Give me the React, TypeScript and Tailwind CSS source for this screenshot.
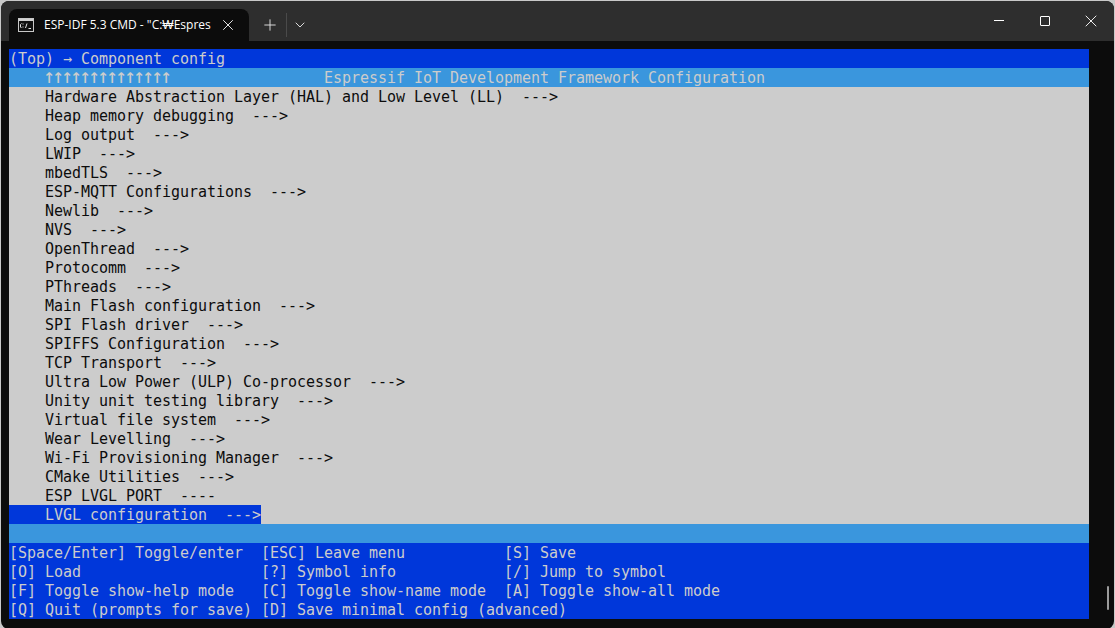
import { ChevronDown, Plus, X } from 'lucide-react';

const items = [
  'Hardware Abstraction Layer (HAL) and Low Level (LL)  --->',
  'Heap memory debugging  --->',
  'Log output  --->',
  'LWIP  --->',
  'mbedTLS  --->',
  'ESP-MQTT Configurations  --->',
  'Newlib  --->',
  'NVS  --->',
  'OpenThread  --->',
  'Protocomm  --->',
  'PThreads  --->',
  'Main Flash configuration  --->',
  'SPI Flash driver  --->',
  'SPIFFS Configuration  --->',
  'TCP Transport  --->',
  'Ultra Low Power (ULP) Co-processor  --->',
  'Unity unit testing library  --->',
  'Virtual file system  --->',
  'Wear Levelling  --->',
  'Wi-Fi Provisioning Manager  --->',
  'CMake Utilities  --->',
  'ESP LVGL PORT  ----',
];

const help = [
  '[Space/Enter] Toggle/enter  [ESC] Leave menu           [S] Save',
  '[O] Load                    [?] Symbol info            [/] Jump to symbol',
  '[F] Toggle show-help mode   [C] Toggle show-name mode  [A] Toggle show-all mode',
  '[Q] Quit (prompts for save) [D] Save minimal config (advanced)',
];

function ConsoleIcon() {
  return (
    <svg width="16" height="14" viewBox="0 0 16 14" className="shrink-0">
      <rect x="0.5" y="0.5" width="15" height="13" fill="#111" stroke="#c8c8c8" />
      <rect x="1" y="1" width="14" height="2" fill="#d0d0d0" />
      <path d="M3.5 5.5 L2.5 6.5 V9 L3.5 10 M5 5.5 V6.5 M5 8.5 V9.5 M7.5 10 L9 5.5 M10.5 10.5 H13" stroke="#e6e6e6" strokeWidth="1" fill="none" />
    </svg>
  );
}

export default function App() {
  return (
    <div className="w-[1115px] h-[628px] bg-[#c9c9c9] overflow-hidden">
      <div className="relative h-full flex flex-col rounded-[8px] overflow-hidden bg-[#0c0c0c] ml-px mt-px mr-px mb-px">
        {/* Title bar */}
        <div className="h-[40px] shrink-0 flex bg-[#2e2e2e] pt-[8px] pl-[8px]">
          <div className="w-[240px] h-[32px] flex items-center bg-[#0c0c0c] rounded-t-[8px] pl-[9px]">
            <ConsoleIcon />
            <span
              className="ml-[10px] w-[165px] whitespace-pre text-[12px] text-white"
              style={{ fontFamily: '"Open Sans", sans-serif' }}
            >
              ESP-IDF 5.3 CMD - "C:₩Espres
            </span>
            <X size={18} strokeWidth={1.3} className="ml-[10px] text-[#e8e8e8]" />
          </div>
          <div className="flex items-center h-[32px] ml-[12px] text-[#e8e8e8]">
            <Plus size={18} strokeWidth={1.2} />
            <div className="w-px h-[24px] bg-[#4a4a4a] ml-[7px]" />
            <ChevronDown size={16} strokeWidth={1.4} className="ml-[5px]" />
          </div>
          <div className="ml-auto flex h-[40px] -mt-[8px] items-center text-white">
            <div className="w-[46px] flex justify-center">
              <div className="w-[10px] h-px bg-white -mt-px" />
            </div>
            <div className="w-[46px] flex justify-center">
              <div className="w-[10px] h-[10px] border border-white rounded-[1px]" />
            </div>
            <div className="w-[46px] flex justify-center">
              <X size={20} strokeWidth={1.1} />
            </div>
          </div>
        </div>

        {/* Terminal */}
        <div className="flex-1 pt-[8px] pl-[8px]">
          <div
            className="w-[1080px] text-[15px] leading-[21px] tracking-[-0.03px] whitespace-pre text-[#cccccc]"
            style={{ fontFamily: '"DejaVu Sans Mono", monospace' }}
          >
            <div className="h-[19px] bg-[#0037da]">(Top) → Component config</div>
            <div className="h-[19px] bg-[#3a96dd]">
              {'    '}
              <span className="text-[20px] leading-[0] tracking-[-3.04px] -ml-[2px] mr-[2px]">↑↑↑↑↑↑↑↑↑↑↑↑↑↑</span>
              {'                 Espressif IoT Development Framework Configuration'}
            </div>
            <div className="bg-[#cccccc] text-[#0c0c0c]">
              {items.map((item) => (
                <div key={item} className="h-[19px]">{'    ' + item}</div>
              ))}
              <div className="h-[19px]">
                <span className="inline-block h-[19px] bg-[#0037da] text-[#cccccc]">{'    LVGL configuration  --->'}</span>
              </div>
            </div>
            <div className="h-[19px] bg-[#3a96dd]" />
            <div className="bg-[#0037da]">
              {help.map((line) => (
                <div key={line} className="h-[19px]">{line}</div>
              ))}
            </div>
          </div>
        </div>

        {/* Scrollbar thumb */}
        <div className="absolute right-[5px] bottom-[19px] w-[2px] h-[24px] rounded-full bg-[#9b9b9b]" />
      </div>
    </div>
  );
}
